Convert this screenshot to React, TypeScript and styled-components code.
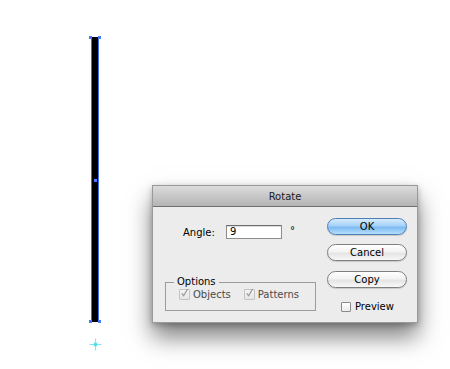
import React from "react";
import styled, { createGlobalStyle } from "styled-components";

const GlobalStyle = createGlobalStyle`
  html, body {
    margin: 0;
    padding: 0;
    background: #fff;
  }
  body {
    font-family: "DejaVu Sans", "Liberation Sans", sans-serif;
  }
`;

const Canvas = styled.div`
  position: relative;
  width: 450px;
  height: 369px;
  overflow: hidden;
  background: #fff;
`;

// the selected stroke on the artboard
const Bar = styled.div`
  position: absolute;
  left: 91px;
  top: 37px;
  width: 8px;
  height: 285px;
  box-sizing: border-box;
  background: #000;
  border-left: 1px solid #3e6cf5;
  border-right: 1px solid #3e6cf5;
`;

const Handle = styled.div<{ $x: number; $y: number }>`
  position: absolute;
  left: ${(p) => p.$x}px;
  top: ${(p) => p.$y}px;
  width: 3px;
  height: 3px;
  background: #4a78ff;
`;

const Pivot = styled.svg`
  position: absolute;
  left: 89px;
  top: 338px;
  width: 13px;
  height: 13px;
  filter: blur(0.5px);
`;

const Dialog = styled.div`
  position: absolute;
  left: 152px;
  top: 185px;
  width: 266px;
  height: 138px;
  box-sizing: border-box;
  border: 1px solid #9a9a9a;
  background: #ececec;
  box-shadow: 0 14px 22px rgba(0, 0, 0, 0.5), 0 2px 6px rgba(0, 0, 0, 0.25);
  display: flex;
  flex-direction: column;
  font-size: 10px;
  color: #000;
`;

const TitleBar = styled.div`
  height: 20px;
  flex: none;
  display: flex;
  align-items: center;
  justify-content: center;
  background: linear-gradient(#dcdcdc, #b4b4b4);
  border-bottom: 1px solid #6f6f6f;
  color: #1a1a1a;
  font-size: 10px;
`;

const Body = styled.div`
  flex: 1;
  display: grid;
  grid-template-columns: 1fr auto;
`;

const LeftCol = styled.div`
  display: flex;
  flex-direction: column;
  padding: 18px 0 0 12px;
`;

const AngleRow = styled.div`
  display: flex;
  align-items: center;
  margin-left: 18px;
  height: 14px;
`;

const Label = styled.span`
  width: 43px;
`;

const Input = styled.div`
  width: 56px;
  height: 14px;
  box-sizing: border-box;
  border: 1px solid #8c8c8c;
  border-top-color: #6e6e6e;
  background: #fff;
  box-shadow: inset 0 1px 1px rgba(0, 0, 0, 0.15);
  padding-left: 3px;
  font-size: 10px;
  line-height: 12px;
`;

const Degree = styled.span`
  margin-left: 8px;
  margin-top: -3px;
`;

const Group = styled.fieldset`
  margin: 37px 0 0 0;
  width: 151px;
  box-sizing: border-box;
  border: 1px solid #9c9c9c;
  padding: 0 0 10px 13px;
`;

const Legend = styled.legend`
  margin-left: -5px;
  padding: 0 3px;
  font-size: 10px;
  line-height: 12px;
  color: #000;
`;

const CheckRow = styled.div`
  display: flex;
  align-items: center;
  gap: 13px;
  height: 12px;
`;

const Check = styled.label<{ $disabled?: boolean }>`
  display: flex;
  align-items: center;
  gap: 3px;
  color: ${(p) => (p.$disabled ? "#4a4a4a" : "#000")};
`;

const Box = styled.span<{ $disabled?: boolean }>`
  width: ${(p) => (p.$disabled ? 11 : 10)}px;
  height: ${(p) => (p.$disabled ? 11 : 10)}px;
  box-sizing: border-box;
  border: 1px solid ${(p) => (p.$disabled ? "#c4c4c4" : "#8a8a8a")};
  border-radius: 1px;
  background: ${(p) =>
    p.$disabled ? "linear-gradient(#f4f4f4, #e6e6e6)" : "linear-gradient(#fff, #ececec)"};
  display: flex;
  align-items: center;
  justify-content: center;
`;

const RightCol = styled.div`
  display: flex;
  flex-direction: column;
  padding: 11px 10px 0 0;
`;

const Button = styled.div<{ $primary?: boolean; $gap: number }>`
  width: 80px;
  height: 17px;
  margin-top: ${(p) => p.$gap}px;
  box-sizing: border-box;
  border-radius: 9px;
  border: 1px solid ${(p) => (p.$primary ? "#4f7fb5" : "#7f7f7f")};
  background: ${(p) =>
    p.$primary
      ? "linear-gradient(#d6ebfd 0%, #a6d2f8 45%, #7dbbf1 55%, #b5defd 100%)"
      : "linear-gradient(#ffffff 0%, #f3f3f3 45%, #e4e4e4 55%, #f8f8f8 100%)"};
  box-shadow: 0 1px 1px rgba(0, 0, 0, 0.15);
  display: flex;
  align-items: center;
  justify-content: center;
  font-size: 10px;
  color: #000;
`;

const PreviewRow = styled.label`
  display: flex;
  align-items: center;
  gap: 4px;
  margin: 13px 0 0 14px;
  color: #000;
`;

const Tick = () => (
  <svg width="10" height="10" viewBox="0 0 10 10" style={{ marginTop: -3 }}>
    <path d="M2 5.5 L4 8 L8.5 0.5" fill="none" stroke="#9a9a9a" strokeWidth="1.4" />
  </svg>
);

export default function App() {
  return (
    <>
      <GlobalStyle />
      <Canvas>
        <Bar />
        <Handle $x={89} $y={36} />
        <Handle $x={98} $y={36} />
        <Handle $x={94} $y={179} />
        <Handle $x={89} $y={320} />
        <Handle $x={98} $y={320} />
        <Pivot viewBox="0 0 13 13">
          <path d="M6.5 0.5 V12.5 M0.5 6.5 H12.5" stroke="#7fe8f4" strokeWidth="1.2" />
          <path d="M4 4 L9 9 M9 4 L4 9" stroke="#bdf3f8" strokeWidth="1" />
          <rect x="5" y="5" width="3" height="3" fill="#4fdcea" />
        </Pivot>

        <Dialog>
          <TitleBar>Rotate</TitleBar>
          <Body>
            <LeftCol>
              <AngleRow>
                <Label>Angle:</Label>
                <Input>9</Input>
                <Degree>°</Degree>
              </AngleRow>
              <Group>
                <Legend>Options</Legend>
                <CheckRow>
                  <Check $disabled>
                    <Box $disabled>
                      <Tick />
                    </Box>
                    Objects
                  </Check>
                  <Check $disabled>
                    <Box $disabled>
                      <Tick />
                    </Box>
                    Patterns
                  </Check>
                </CheckRow>
              </Group>
            </LeftCol>
            <RightCol>
              <Button $primary $gap={0}>OK</Button>
              <Button $gap={9}>Cancel</Button>
              <Button $gap={10}>Copy</Button>
              <PreviewRow>
                <Box />
                Preview
              </PreviewRow>
            </RightCol>
          </Body>
        </Dialog>
      </Canvas>
    </>
  );
}
